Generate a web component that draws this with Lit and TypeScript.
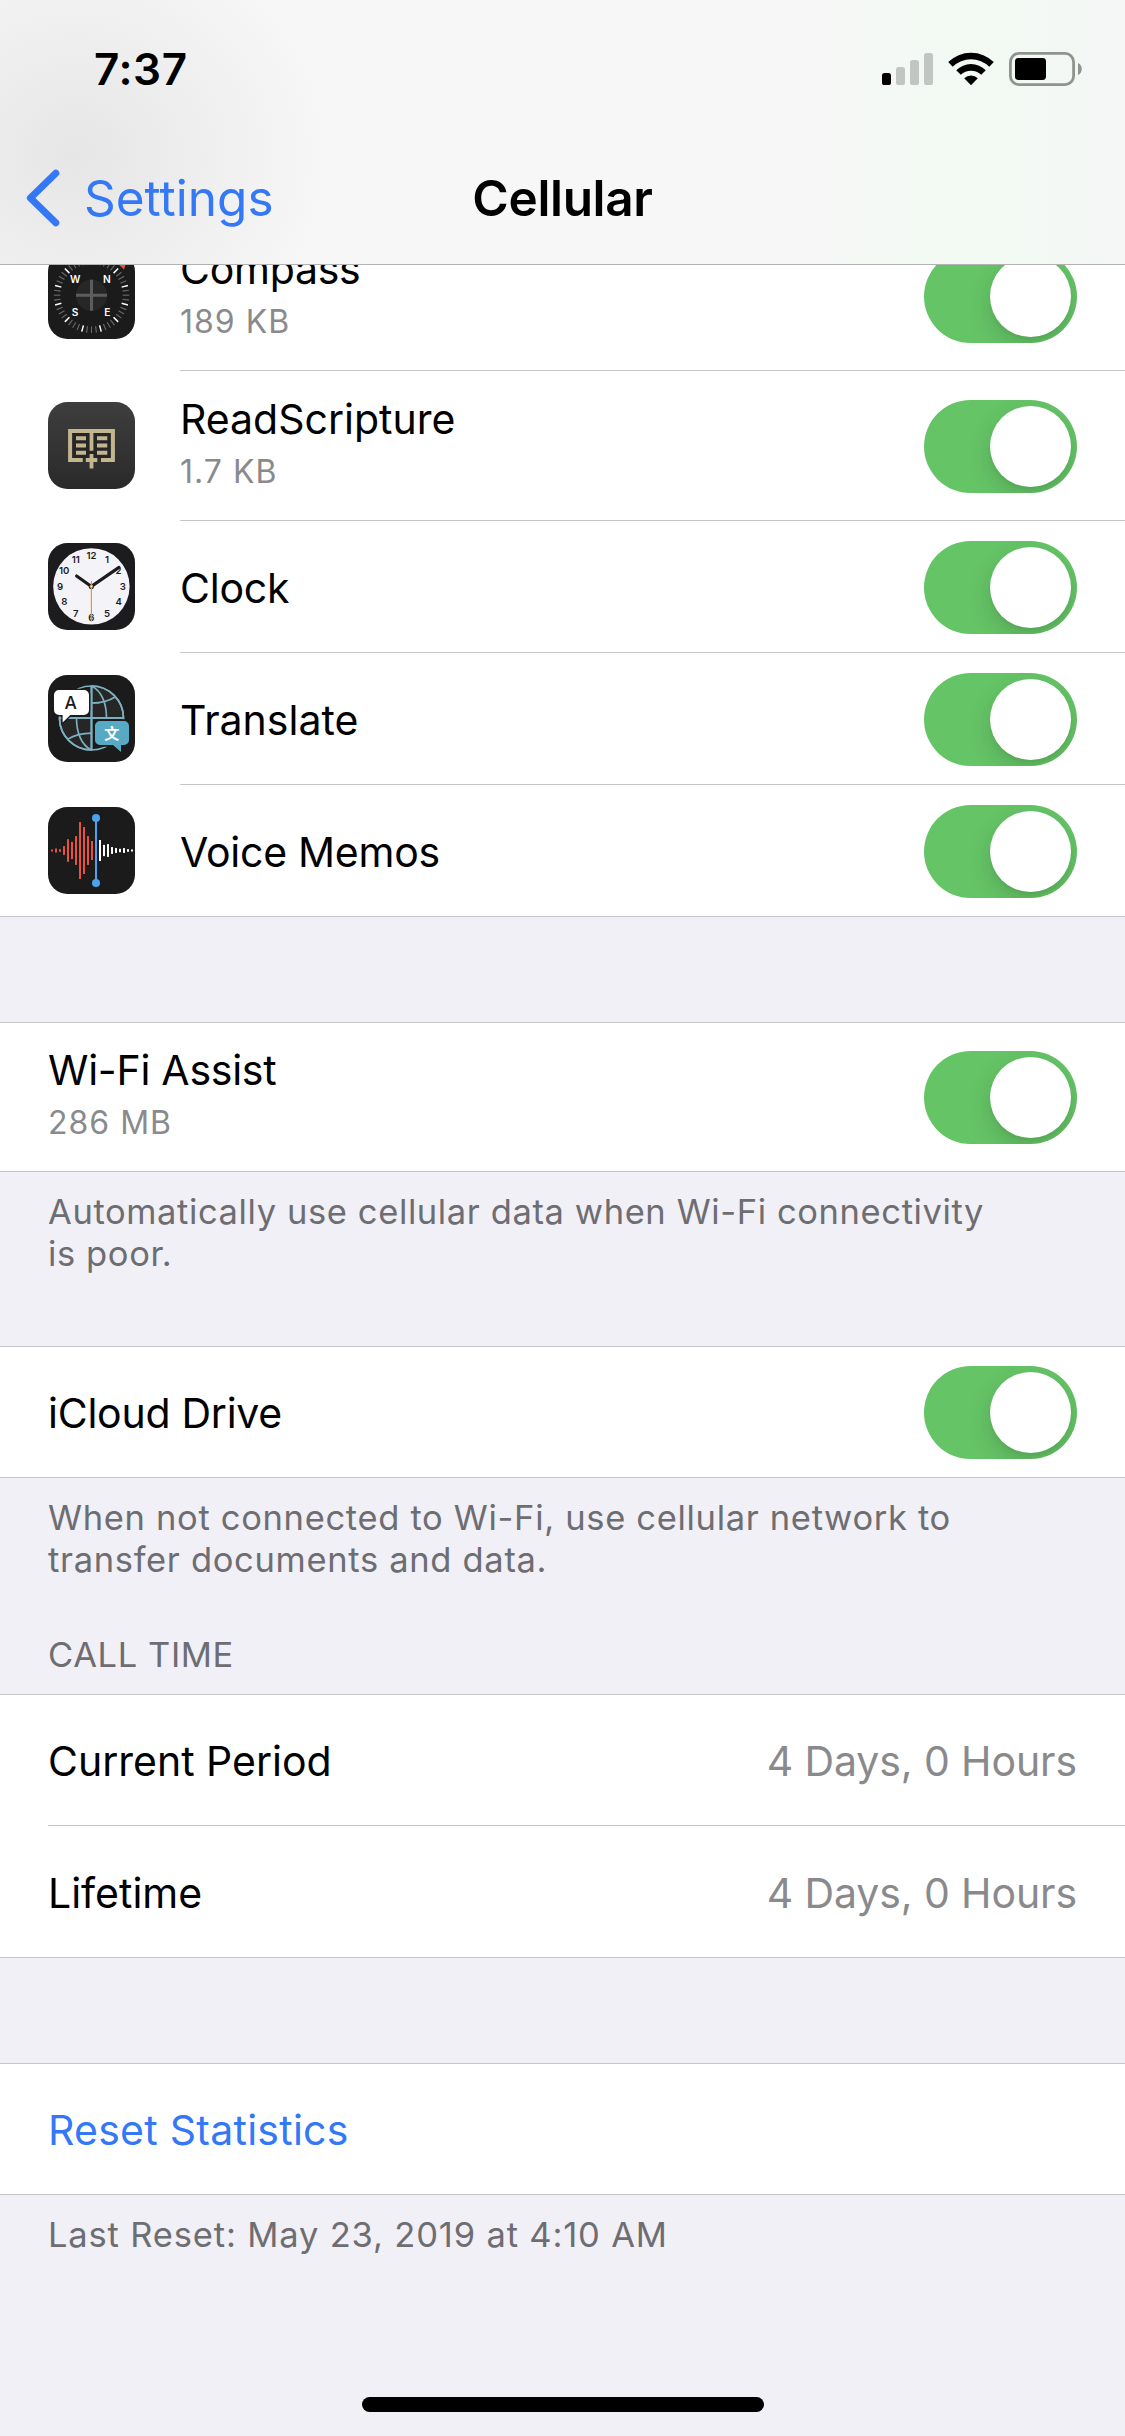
import { LitElement, html, svg, css, nothing, TemplateResult } from "lit";
import { customElement, property } from "lit/decorators.js";
import { classMap } from "lit/directives/class-map.js";

/* ---------- App icons, drawn on an 87 x 87 grid ---------- */

const compassTicks = Array.from({ length: 48 }, (_, i) => {
  const bright = i % 4 === 2;
  return svg`<line x1="43.5" y1="5.5" x2="43.5" y2="12" transform="rotate(${i * 7.5} 43.5 43.2)"
    stroke=${bright ? "#fff" : "#6a6a6a"} stroke-width=${bright ? 1.5 : 1.1} />`;
});

const compassIcon = html`<svg class="icon" viewBox="0 0 87 87">
  <rect width="87" height="87" rx="19.5" fill="#1b1b1b" />
  ${compassTicks}
  <circle cx="43.5" cy="43.2" r="15.6" fill="#272727" />
  <path d="M43.5 27.8V58.8M28 43.3H59" stroke="#5d5d5d" stroke-width="3" />
  <path d="M67 9L79.5 7L76 17.4Z" fill="#eb4d3d" />
  <g fill="#fff" font-family="Inter, sans-serif" font-size="10.2" font-weight="600" text-anchor="middle">
    <text x="27.3" y="30.7">W</text><text x="58.8" y="30.7">N</text>
    <text x="27" y="63.7">S</text><text x="59.3" y="63.7">E</text>
  </g>
</svg>`;

const scriptureIcon = html`<svg class="icon" viewBox="0 0 87 87">
  <defs>
    <linearGradient id="ink" x1="0" y1="0" x2="0" y2="1">
      <stop offset="0" stop-color="#3e3e3e" /><stop offset="1" stop-color="#2a2a2a" />
    </linearGradient>
  </defs>
  <rect width="87" height="87" rx="19.5" fill="url(#ink)" />
  <rect x="24.3" y="30.5" width="38.4" height="26" fill="#262626" />
  <path d="M34.7 58H22.1V29H64.9V58H53" fill="none" stroke="#c3b58f" stroke-width="4" />
  <path d="M43.5 30V48.7M43.5 52V66.5M37.8 58H49.3" stroke="#c3b58f" stroke-width="3.8" />
  <path d="M28 36.2H38M28 43.5H38M28 50.8H38M49 36.2H59.3M49 43.5H59.3M49 50.8H59.3"
    stroke="#c3b58f" stroke-width="4" />
</svg>`;

const clockNumbers = Array.from({ length: 12 }, (_, i) => {
  const n = i + 1;
  const a = (n * Math.PI) / 6;
  return svg`<text x=${43.4 + 31.4 * Math.sin(a)} y=${46.8 - 31.1 * Math.cos(a)}>${n}</text>`;
});

const clockIcon = html`<svg class="icon" viewBox="0 0 87 87">
  <rect width="87" height="87" rx="19.5" fill="#1c1c1e" />
  <circle cx="43.4" cy="43.4" r="38.2" fill="#f4f4f8" />
  <g fill="#1c1c1e" font-family="Inter, sans-serif" font-size="9.6" font-weight="600" text-anchor="middle">
    ${clockNumbers}
  </g>
  <path d="M43.4 43.4L28.6 32.9M43.4 43.4L71 24.4" stroke="#1c1c1e" stroke-linecap="round" stroke-width="3.1" />
  <circle cx="43.4" cy="43.4" r="2.6" fill="#1c1c1e" />
  <path d="M43.4 38V78.6" stroke="#e8982f" stroke-width="1.2" />
  <circle cx="43.4" cy="43.4" r="1.3" fill="#f4f4f8" stroke="#e8982f" stroke-width="1" />
</svg>`;

const translateIcon = html`<svg class="icon" viewBox="0 0 87 87">
  <rect width="87" height="87" rx="19.5" fill="#1b1b1b" />
  <g stroke="#7db0be" stroke-width="1.7" fill="none">
    <path d="M43.5 11A32 32 0 0 1 75.5 43H43.5Z" fill="#262626" />
    <path d="M43.5 75A32 32 0 0 1 11.5 43H43.5Z" fill="#262626" />
    <circle cx="43.5" cy="43" r="32" />
    <path d="M43.5 11C54 16 58.5 29 58.5 43M43.5 75C33 70 28.5 57 28.5 43" />
    <path d="M43.5 28.2C53 28.2 61 26 67.5 21.8M43.5 58.2C34 58.2 26 60.4 19.5 64.4" />
    <path d="M43.5 11V75M11.5 43H75.5" stroke-width="2" />
  </g>
  <path d="M11 15H36A5 5 0 0 1 41 20V35A5 5 0 0 1 36 40H22.3L14.6 47.4V40H11A5 5 0 0 1 6 35V20A5 5 0 0 1 11 15Z"
    fill="#fff" stroke="#1b1b1b" stroke-width="2.6" paint-order="stroke" />
  <path d="M52 46H76A5 5 0 0 1 81 51V65A5 5 0 0 1 76 70H73V77L65 70H52A5 5 0 0 1 47 65V51A5 5 0 0 1 52 46Z"
    fill="#58aac4" stroke="#1b1b1b" stroke-width="3.6" paint-order="stroke" />
  <text x="22.8" y="34.2" fill="#1b1b1b" font-family="Inter, sans-serif" font-size="17.5"
    font-weight="500" text-anchor="middle">A</text>
  <text x="63.8" y="63.6" fill="#fff" font-family="'Noto Sans CJK SC', sans-serif" font-size="15"
    font-weight="700" text-anchor="middle">文</text>
</svg>`;

const redBars = [2, 4, 2.6, 8.8, 22.6, 17.2, 28.8, 57, 47, 28.8, 19];
const whiteBars = [21, 11.2, 12.8, 6.8, 4.8, 3.4, 4.8, 2.6, 2];

const bars = (heights: number[], x0: number, color: string) =>
  heights.map(
    (h, i) => svg`<rect x=${x0 + i * 4} y=${43.5 - h / 2} width="2" height=${h} fill=${color} />`
  );

const memosIcon = html`<svg class="icon" viewBox="0 0 87 87">
  <rect width="87" height="87" rx="19.5" fill="#1b1b1b" />
  ${bars(redBars, 3, "#e9503f")} ${bars(whiteBars, 51, "#fff")}
  <rect x="47" y="11" width="2" height="65" fill="#4ba3f0" />
  <circle cx="48" cy="11" r="4" fill="#4ba3f0" />
  <circle cx="48" cy="76" r="4" fill="#4ba3f0" />
</svg>`;

/* ---------- Switch ---------- */

@customElement("ios-switch")
export class IosSwitch extends LitElement {
  static styles = css`
    :host {
      display: block;
      flex: none;
      padding-top: 1px;
    }
    .track {
      box-sizing: border-box;
      width: 153px;
      height: 93px;
      padding: 6px;
      border-radius: 47px;
      background: #65c466;
      display: flex;
      justify-content: flex-end;
      overflow: hidden;
    }
    .knob {
      width: 81px;
      height: 81px;
      border-radius: 50%;
      background: #fff;
      box-shadow: 0 9px 24px rgba(0, 0, 0, 0.15), 0 3px 3px rgba(0, 0, 0, 0.04);
    }
  `;

  render() {
    return html`<div class="track" role="switch" aria-checked="true"><div class="knob"></div></div>`;
  }
}

/* ---------- Row ---------- */

@customElement("settings-row")
export class SettingsRow extends LitElement {
  @property() label = "";
  @property() sub = "";
  @property() value = "";
  @property() tracking = "";
  @property({ type: Boolean }) toggle = false;
  @property({ type: Boolean }) link = false;
  @property({ type: Boolean }) first = false;
  @property({ type: Boolean }) last = false;
  @property({ attribute: false }) icon: TemplateResult | null = null;

  static styles = css`
    :host {
      display: block;
    }
    .row {
      display: flex;
      height: 131px;
      padding-left: 48px;
      background: #fff;
    }
    .row.tall {
      height: 149px;
    }
    .row.first {
      height: 130px;
    }
    .row.first.tall {
      height: 148px;
    }
    .icon {
      display: block;
      flex: none;
      align-self: center;
      width: 87px;
      height: 87px;
      margin-right: 45px;
    }
    .body {
      box-sizing: content-box;
      flex: 1;
      display: flex;
      align-items: center;
      justify-content: space-between;
      padding-right: 48px;
    }
    .body.line {
      height: 100%;
      border-bottom: 1px solid #c6c6c8;
    }
    .text {
      padding-top: 3px;
    }
    .first .text,
    .first .value {
      padding-top: 2px;
    }
    .tall .text {
      padding-top: 0;
      padding-bottom: 8px;
    }
    .label,
    .value {
      font-size: 41px;
      line-height: 54px;
      white-space: nowrap;
      color: #000;
    }
    .tight {
      letter-spacing: -0.25px;
    }
    .loose {
      letter-spacing: 0.26px;
    }
    .label.link {
      color: #3478f6;
    }
    .sub {
      margin-top: 6px;
      font-size: 32px;
      line-height: 40px;
      letter-spacing: 1px;
      color: #8a8a8d;
    }
    .value {
      padding-top: 3px;
      letter-spacing: -0.1px;
      color: #8a8a8d;
    }
  `;

  render() {
    return html`<div class=${classMap({ row: true, tall: !!this.sub, first: this.first })}>
      ${this.icon ?? nothing}
      <div class=${classMap({ body: true, line: !this.last })}>
        <div class="text">
          <div
            class=${classMap({
              label: true,
              link: this.link,
              tight: this.tracking === "tight",
              loose: this.tracking === "loose",
            })}
          >${this.label}</div>
          ${this.sub ? html`<div class="sub">${this.sub}</div>` : nothing}
        </div>
        ${this.toggle ? html`<ios-switch></ios-switch>` : nothing}
        ${this.value ? html`<div class="value">${this.value}</div>` : nothing}
      </div>
    </div>`;
  }
}

/* ---------- Header ---------- */

@customElement("nav-header")
export class NavHeader extends LitElement {
  static styles = css`
    :host {
      display: block;
    }
    .header {
      height: 264px;
      border-bottom: 1px solid #b2b2b3;
      background:
        radial-gradient(ellipse 260px 240px at 75px 155px, rgba(190, 190, 190, 0.3), rgba(195, 195, 195, 0.16) 50%, rgba(210, 210, 210, 0) 100%),
        linear-gradient(90deg, rgba(241, 250, 242, 0) 800px, rgba(241, 250, 242, 0.85) 940px, rgba(241, 250, 242, 0.85) 1000px, rgba(242, 247, 244, 0.7) 1080px, rgba(244, 246, 245, 0.6) 1125px),
        #f7f7f7;
    }
    .status {
      box-sizing: border-box;
      display: flex;
      align-items: center;
      justify-content: space-between;
      height: 132px;
      padding: 6px 43px 0 94px;
    }
    .time {
      font-size: 44px;
      line-height: 54px;
      font-weight: 600;
      letter-spacing: 0.6px;
    }
    .indicators {
      display: block;
      width: 200px;
      height: 36px;
    }
    .nav {
      display: grid;
      grid-template-columns: 1fr auto 1fr;
      align-items: center;
      height: 132px;
      font-size: 49.5px;
      line-height: 60px;
    }
    .back {
      display: flex;
      align-items: center;
      gap: 24px;
      padding-left: 26px;
      color: #3478f6;
    }
    .chevron {
      display: block;
      width: 34px;
      height: 58px;
    }
    .title {
      font-weight: 600;
      letter-spacing: -0.33px;
    }
  `;

  render() {
    return html`<header class="header">
      <div class="status">
        <div class="time">7:37</div>
        <svg class="indicators" viewBox="882 51 200 36">
          <rect x="882" y="73" width="9" height="12" rx="2.6" />
          <g fill="#c2c6c3">
            <rect x="896" y="67" width="9" height="18" rx="2.6" />
            <rect x="910" y="60" width="9" height="25" rx="2.6" />
            <rect x="924" y="53" width="9" height="32" rx="2.6" />
          </g>
          <path d="M948.2 62.1A32.4 32.4 0 0 1 993.8 62.1L989.3 66.7A26 26 0 0 0 952.7 66.7Z" />
          <path d="M956.2 70.2A21 21 0 0 1 985.8 70.2L981.2 74.8A14.6 14.6 0 0 0 960.8 74.8Z" />
          <path d="M964.2 78.2A9.6 9.6 0 0 1 977.8 78.2L971 85.2Z" />
          <rect x="1010.4" y="53.4" width="63.2" height="31.2" rx="8.5" fill="none" stroke="#8f948f" stroke-width="2.8" />
          <rect x="1015" y="58" width="31" height="22" rx="3.4" />
          <path d="M1078 63C1083 65 1083 73 1078 75Z" fill="#8f948f" />
        </svg>
      </div>
      <div class="nav">
        <div class="back">
          <svg class="chevron" viewBox="0 0 34 58">
            <path d="M29.8 4.2L4.4 29L29.8 53.8" fill="none" stroke="#3478f6" stroke-width="7"
              stroke-linecap="round" stroke-linejoin="round" />
          </svg>
          <span>Settings</span>
        </div>
        <div class="title">Cellular</div>
      </div>
    </header>`;
  }
}

/* ---------- Page ---------- */

@customElement("app-root")
export class AppRoot extends LitElement {
  static styles = css`
    :host {
      display: block;
    }
    .screen {
      display: flex;
      flex-direction: column;
      height: 2436px;
      overflow: hidden;
      background: #f1f0f6;
      color: #000;
      font-family: "Inter", "Liberation Sans", sans-serif;
    }
    .apps {
      overflow: hidden;
      flex: none;
      border-bottom: 1px solid #c6c6c8;
      background: #fff;
    }
    .scrolled {
      margin-top: -44px;
      display: flex;
      flex-direction: column;
      gap: 1px;
    }
    .group {
      flex: none;
      display: flex;
      flex-direction: column;
      gap: 1px;
      background: #fff;
      border-top: 1px solid #c6c6c8;
      border-bottom: 1px solid #c6c6c8;
    }
    .gap {
      flex: none;
      height: 105px;
    }
    .note,
    .heading {
      box-sizing: border-box;
      flex: none;
      padding: 18.5px 48px 0;
      font-size: 34.5px;
      line-height: 42px;
      letter-spacing: 0.61px;
      color: #6d6d72;
    }
    .assist {
      height: 174px;
    }
    .drive {
      height: 102.5px;
      letter-spacing: 0.68px;
    }
    .heading {
      padding: 53px 48px 18.5px;
      letter-spacing: 0.6px;
    }
    .reset {
      letter-spacing: 0.84px;
    }
    .home {
      width: 402px;
      height: 15px;
      border-radius: 8px;
      background: #000;
      margin: auto auto 24px;
    }
  `;

  render() {
    return html`<main class="screen">
      <nav-header></nav-header>
      <section class="apps">
        <div class="scrolled">
          <settings-row .icon=${compassIcon} label="Compass" sub="189 KB" tracking="tight" toggle></settings-row>
          <settings-row .icon=${scriptureIcon} label="ReadScripture" sub="1.7 KB" toggle></settings-row>
          <settings-row .icon=${clockIcon} label="Clock" tracking="tight" toggle></settings-row>
          <settings-row .icon=${translateIcon} label="Translate" toggle></settings-row>
          <settings-row .icon=${memosIcon} label="Voice Memos" tracking="tight" toggle last></settings-row>
        </div>
      </section>
      <div class="gap"></div>
      <section class="group">
        <settings-row label="Wi-Fi Assist" sub="286 MB" tracking="tight" toggle first last></settings-row>
      </section>
      <div class="note assist">Automatically use cellular data when Wi-Fi connectivity<br />is poor.</div>
      <section class="group">
        <settings-row label="iCloud Drive" tracking="tight" toggle first last></settings-row>
      </section>
      <div class="note drive">When not connected to Wi-Fi, use cellular network to<br />transfer documents and data.</div>
      <div class="heading">CALL TIME</div>
      <section class="group">
        <settings-row label="Current Period" value="4 Days, 0 Hours" first></settings-row>
        <settings-row label="Lifetime" value="4 Days, 0 Hours" last></settings-row>
      </section>
      <div class="gap"></div>
      <section class="group">
        <settings-row label="Reset Statistics" tracking="loose" link first last></settings-row>
      </section>
      <div class="note reset">Last Reset: May 23, 2019 at 4:10 AM</div>
      <div class="home"></div>
    </main>`;
  }
}
